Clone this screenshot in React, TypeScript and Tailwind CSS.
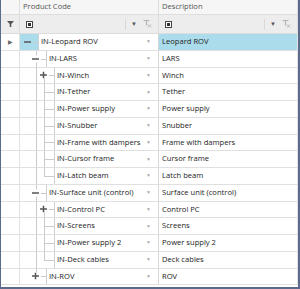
import React from 'react';

type Row = {
  code: string;
  desc: string;
  level: number;
  exp?: 'minus' | 'plus';
  // vertical guide segments: [column x, 'full' | 'top' | 'bottom']
  guides?: [number, 'full' | 'top' | 'bottom'][];
  tick?: boolean;
  selected?: boolean;
};

const rows: Row[] = [
  { code: 'IN-Leopard ROV', desc: 'Leopard ROV', level: 0, exp: 'minus', selected: true },
  { code: 'IN-LARS', desc: 'LARS', level: 1, exp: 'minus', guides: [[16, 'full']] },
  { code: 'IN-Winch', desc: 'Winch', level: 2, exp: 'plus', guides: [[16, 'full'], [24, 'bottom']] },
  { code: 'IN-Tether', desc: 'Tether', level: 2, tick: true, guides: [[16, 'full'], [24, 'full']] },
  { code: 'IN-Power supply', desc: 'Power supply', level: 2, tick: true, guides: [[16, 'full'], [24, 'full']] },
  { code: 'IN-Snubber', desc: 'Snubber', level: 2, tick: true, guides: [[16, 'full'], [24, 'full']] },
  { code: 'IN-Frame with dampers', desc: 'Frame with dampers', level: 2, tick: true, guides: [[16, 'full'], [24, 'full']] },
  { code: 'IN-Cursor frame', desc: 'Cursor frame', level: 2, tick: true, guides: [[16, 'full'], [24, 'full']] },
  { code: 'IN-Latch beam', desc: 'Latch beam', level: 2, tick: true, guides: [[16, 'full'], [24, 'top']] },
  { code: 'IN-Surface unit (control)', desc: 'Surface unit (control)', level: 1, exp: 'minus', guides: [[16, 'full']] },
  { code: 'IN-Control PC', desc: 'Control PC', level: 2, exp: 'plus', guides: [[16, 'full'], [24, 'bottom']] },
  { code: 'IN-Screens', desc: 'Screens', level: 2, tick: true, guides: [[16, 'full'], [24, 'full']] },
  { code: 'IN-Power supply 2', desc: 'Power supply 2', level: 2, tick: true, guides: [[16, 'full'], [24, 'full']] },
  { code: 'IN-Deck cables', desc: 'Deck cables', level: 2, tick: true, guides: [[16, 'full'], [24, 'top']] },
  { code: 'IN-ROV', desc: 'ROV', level: 1, exp: 'plus', guides: [[16, 'top']] },
];

const boxLeft = [18, 26, 34];
const expCenter = [8, 16, 24];

function Expander({ kind }: { kind: 'minus' | 'plus' }) {
  return (
    <svg width="7" height="7" viewBox="0 0 7 7" className="block">
      <rect x="0" y="2.75" width="7" height="1.5" fill="#555" />
      {kind === 'plus' && <rect x="2.75" y="0" width="1.5" height="7" fill="#555" />}
    </svg>
  );
}

function FilterClear() {
  return (
    <svg width="9" height="8" viewBox="0 0 9 8" className="block">
      <path d="M0.5 0.5h6M3.5 0.5v5" stroke="#b5b5b5" strokeWidth="1.2" fill="none" />
      <path d="M5 4.5l3 3M8 4.5l-3 3" stroke="#b5b5b5" strokeWidth="1" fill="none" />
    </svg>
  );
}

function SelectBox() {
  return (
    <svg width="7" height="7" viewBox="0 0 7 7" className="block">
      <rect x="0.5" y="0.5" width="6" height="6" fill="#fff" stroke="#444" />
      <rect x="2" y="2" width="3" height="3" fill="#333" />
    </svg>
  );
}

function FilterCell() {
  return (
    <div className="flex items-center h-full pl-[6px] pr-[6px]">
      <SelectBox />
      <div className="flex-1" />
      <div className="h-[11px] w-px bg-[#d8d8d8] mr-[5px]" />
      <span className="text-[6px] text-[#555] mr-[6px]">▼</span>
      <FilterClear />
    </div>
  );
}

export default function App() {
  return (
    <div
      className="w-[300px] h-[289px] bg-white border-l border-r-2 border-b-2 border-[#5b6b8c] overflow-hidden text-[7.6px] text-[#222] leading-none"
      style={{ fontFamily: '"Open Sans", "Noto Sans", sans-serif' }}
    >
      {/* header */}
      <div className="flex h-[15px] bg-[#f6f6f6] border-b border-[#dedede] text-[#555]">
        <div className="w-[19px] border-r border-[#dedede]" />
        <div className="w-[139px] border-r border-[#dedede] flex items-center pl-[3px]">Product Code</div>
        <div className="flex-1 border-r border-[#dedede] flex items-center pl-[3px]">Description</div>
      </div>
      {/* filter row */}
      <div className="flex h-[19px] bg-[#ededed] border-b border-[#dcdcdc]">
        <div className="w-[19px] border-r border-[#dcdcdc] flex items-center justify-center">
          <svg width="7" height="6" viewBox="0 0 7 6" className="block">
            <path d="M0 0h7L4.3 3v3H2.7V3z" fill="#555" />
          </svg>
        </div>
        <div className="w-[139px] border-r border-[#dcdcdc]">
          <FilterCell />
        </div>
        <div className="flex-1 border-r border-[#dcdcdc]">
          <FilterCell />
        </div>
      </div>
      {/* rows */}
      {rows.map((r, i) => (
        <div key={i} className="flex h-[16.75px] border-b border-[#e0e0e0]">
          <div className="w-[19px] border-r border-[#e2e2e2] flex items-center justify-center">
            {r.selected && <span className="text-[6px] text-[#666]">▶</span>}
          </div>
          <div className="w-[139px] border-r border-[#d6d6d6] flex">
            <div
              className={`relative shrink-0 ${r.selected ? 'bg-[#abdcec]' : ''}`}
              style={{ width: boxLeft[r.level] }}
            >
              {r.guides?.map(([x, kind], g) => (
                <div
                  key={g}
                  className={`absolute w-px bg-[#cacaca] ${
                    kind === 'full' ? 'top-0 bottom-0' : kind === 'top' ? 'top-0 h-1/2' : 'top-1/2 bottom-0'
                  }`}
                  style={{ left: x }}
                />
              ))}
              {r.tick && (
                <div
                  className="absolute top-1/2 h-px bg-[#cacaca]"
                  style={{ left: expCenter[r.level], right: 0 }}
                />
              )}
              {r.exp && (
                <>
                  <div
                    className="absolute top-1/2 h-px bg-[#cacaca]"
                    style={{ left: expCenter[r.level] + 5, right: 0 }}
                  />
                  <div
                    className={`absolute top-1/2 -translate-y-1/2 ${r.selected ? 'bg-[#abdcec]' : 'bg-white'}`}
                    style={{ left: expCenter[r.level] - 4 }}
                  >
                    <Expander kind={r.exp} />
                  </div>
                </>
              )}
            </div>
            <div className="flex-1 flex items-center bg-white border-l border-[#cfcfcf] pl-[2px] pr-[7px] whitespace-nowrap">
              <span className="flex-1">{r.code}</span>
              <span className="text-[5px] text-[#aaa]">▼</span>
            </div>
          </div>
          <div
            className={`flex-1 flex items-center pl-[3px] border-r border-[#e2e2e2] ${
              r.selected ? 'bg-[#abdcec]' : 'bg-white'
            }`}
          >
            {r.desc}
          </div>
        </div>
      ))}
    </div>
  );
}
